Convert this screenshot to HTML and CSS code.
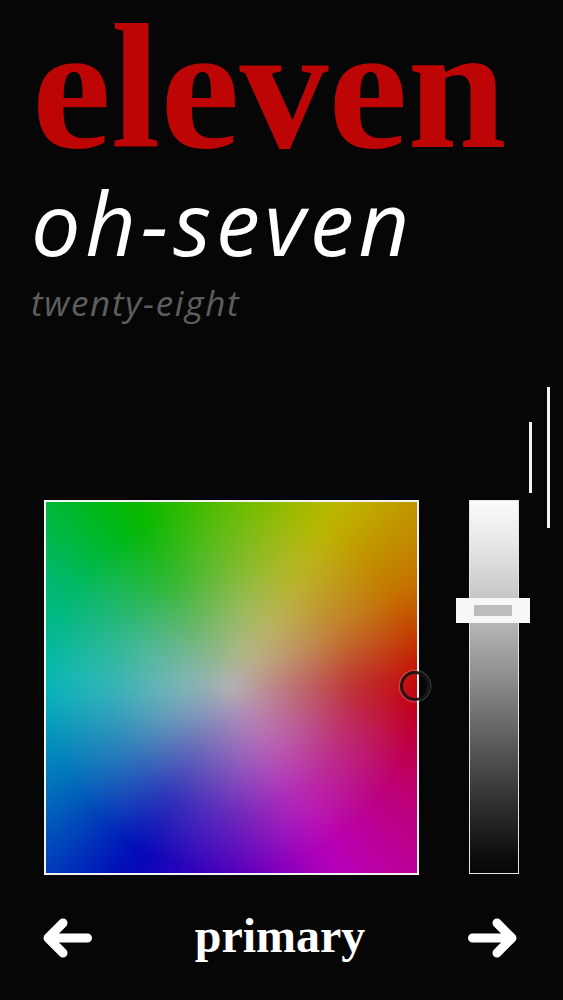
FILE: index.html
```html
<!DOCTYPE html>
<html lang="en">
<head>
<meta charset="utf-8">
<title>Colour picker</title>
<link rel="stylesheet" href="styles.css">
</head>
<body>
<main class="screen">
  <header class="titles">
    <h1 class="hour">eleven</h1>
    <p class="minute">oh-seven</p>
    <p class="second">twenty-eight</p>
  </header>

  <section class="picker">
    <div class="square">
      <div class="square-field">
        <div class="square-hue"></div>
        <div class="square-white"></div>
      </div>
      <div class="handle"></div>
    </div>
    <div class="slider">
      <div class="thumb"><div class="thumb-grip"></div></div>
    </div>
    <div class="meter meter-short"></div>
    <div class="meter meter-long"></div>
  </section>

  <nav class="nav">
    <button class="arrow" aria-label="previous">
      <svg viewBox="0 0 52 44" width="52" height="44">
        <path d="M45.5 22 H6 M21 7 L6 22 L21 37" fill="none" stroke="#fff" stroke-width="9" stroke-linecap="round" stroke-linejoin="round"/>
      </svg>
    </button>
    <span class="label">primary</span>
    <button class="arrow" aria-label="next">
      <svg viewBox="0 0 52 44" width="52" height="44">
        <path d="M6.5 22 H46 M31 7 L46 22 L31 37" fill="none" stroke="#fff" stroke-width="9" stroke-linecap="round" stroke-linejoin="round"/>
      </svg>
    </button>
  </nav>
</main>
</body>
</html>
```

FILE: styles.css
```css
html, body {
  margin: 0;
  padding: 0;
  background: #060606;
}

.screen {
  width: 563px;
  height: 1000px;
  display: flex;
  flex-direction: column;
  overflow: hidden;
}

.titles {
  display: flex;
  flex-direction: column;
  padding-top: 2px;
}

.hour {
  margin: 0 0 0 32px;
  font-family: "Liberation Serif", serif;
  font-weight: 700;
  font-size: 178px;
  line-height: 170px;
  color: #bd0505;
}

.minute {
  margin: 0 0 0 31px;
  font-family: "Open Sans", sans-serif;
  font-style: italic;
  font-weight: 400;
  font-size: 88px;
  line-height: 100px;
  letter-spacing: 4.8px;
  color: #ffffff;
}

.second {
  margin: 0 0 0 31px;
  font-family: "Open Sans", sans-serif;
  font-style: italic;
  font-weight: 400;
  font-size: 35px;
  line-height: 62px;
  letter-spacing: 1.7px;
  color: #5e5e5e;
}

.picker {
  display: flex;
  align-items: flex-start;
  margin-top: 53px;
  padding-left: 44px;
}

.square {
  position: relative;
  box-sizing: border-box;
  width: 375px;
  height: 375px;
  margin-top: 113px;
  border: 2px solid #f2f2f2;
}

.square-field {
  position: absolute;
  inset: 0;
  overflow: hidden;
}

.square-hue {
  position: absolute;
  inset: -40px;
  filter: blur(14px);
  background: conic-gradient(from 0deg at 50% 50%,
    #62bd00 0deg,
    #bdb800 30deg,
    #c47400 60deg,
    #c20006 90deg,
    #bd0070 120deg,
    #b800bb 150deg,
    #5000bd 180deg,
    #0008b8 210deg,
    #0070bb 240deg,
    #08b8bb 270deg,
    #00b870 300deg,
    #00b800 330deg,
    #62bd00 360deg);
}

.square-white {
  position: absolute;
  inset: 0;
  background: radial-gradient(circle closest-side at 50% 50%,
    rgba(185, 182, 185, 0.92) 0%,
    rgba(185, 182, 185, 0.62) 30%,
    rgba(185, 182, 185, 0.25) 65%,
    rgba(185, 182, 185, 0) 100%);
}

.handle {
  position: absolute;
  left: 354px;
  top: 169px;
  width: 30px;
  height: 30px;
  box-sizing: border-box;
  border-radius: 50%;
  border: 3px solid rgba(22, 22, 22, 0.92);
  box-shadow: 0 0 0 1.5px rgba(255, 255, 255, 0.18);
}

.slider {
  position: relative;
  box-sizing: border-box;
  width: 50px;
  height: 374px;
  margin-top: 113px;
  margin-left: 50px;
  border: 1.5px solid #e4e4e4;
  background: linear-gradient(#fbfbfb 0%, #e6e6e6 12%, #bdbdbd 30%, #8c8c8c 48%, #5e5e5e 64%, #333 80%, #0c0c0c 96%, #060606 100%);
}

.thumb {
  position: absolute;
  left: -14.5px;
  top: 96.5px;
  width: 74px;
  height: 25px;
  box-sizing: border-box;
  padding: 7px 18px;
  background: #f7f7f7;
  display: flex;
}

.thumb-grip {
  flex: 1;
  background: #bdbdbd;
}

.meter {
  width: 3px;
  background: #f2f2f2;
}

.meter-short {
  height: 71px;
  margin-top: 35px;
  margin-left: 10px;
}

.meter-long {
  height: 141px;
  margin-top: 0;
  margin-left: 15px;
}

.nav {
  display: flex;
  align-items: center;
  justify-content: space-between;
  height: 44px;
  margin-top: 41px;
  padding: 0 45px 0 42px;
}

.arrow {
  display: flex;
  padding: 0;
  margin: 0;
  border: 0;
  background: none;
}

.label {
  margin-bottom: 4px;
  font-family: "Liberation Serif", serif;
  font-weight: 700;
  font-size: 48px;
  line-height: 44px;
  color: #ffffff;
}
```
